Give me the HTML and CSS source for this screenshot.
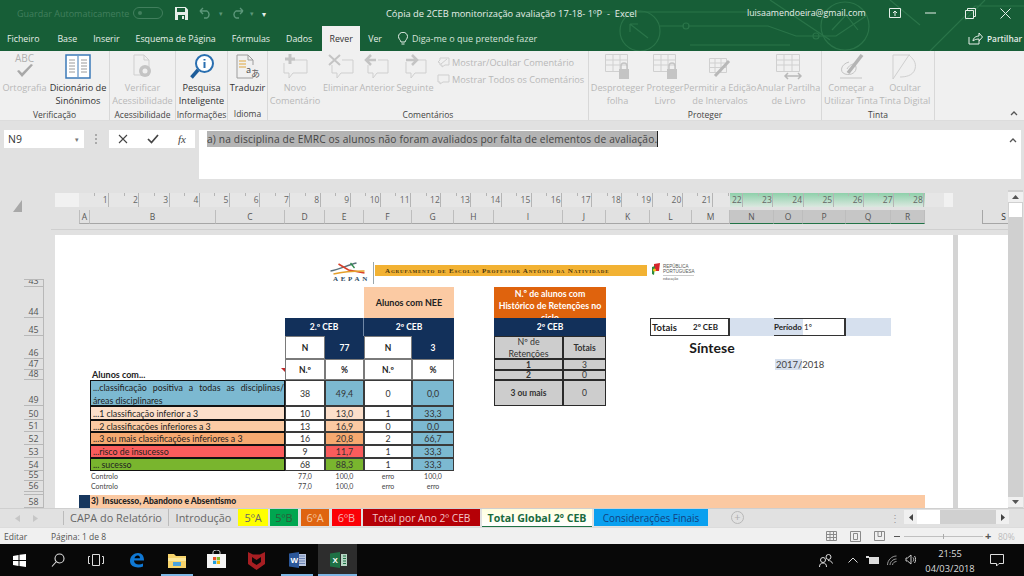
FILE: index.html
```html
<!DOCTYPE html>
<html lang="pt">
<head>
<meta charset="utf-8">
<title>Excel</title>
<link rel="stylesheet" href="styles.css">
</head>
<body>
<div class="app">
  <header class="head">
    <svg class="circuit" viewBox="0 0 424 51" width="424" height="51" fill="none" stroke="#2a7449" stroke-width="1.2">
      <circle cx="40" cy="31" r="20"/><path d="M30 24l18 14M30 24h8M30 24v8"/>
      <path d="M0 12h110l60-0M88 26h80l28 10h40l30-20M60 26h24"/><circle cx="86" cy="26" r="3"/><circle cx="216" cy="36" r="3"/>
      <path d="M90 45h100M170 0l60 40"/>
      <circle cx="245" cy="26" r="24"/><path d="M232 30l14-15 12 15"/>
      <path d="M330 51l45-45h49M385 0l-20 20M290 0l30 25"/>
    </svg>
    <div class="titlebar">
      <span class="autosave">Guardar Automaticamente</span>
      <span class="toggle"><i></i></span>
      <svg class="qat-save" width="13" height="13" viewBox="0 0 13 13"><path d="M0 0h10.5L13 2.5V13H0z" fill="#e6efe9"/><path d="M2 1h8v4H2zM3 8h7v5H3z" fill="#175e37"/><path d="M7 9h2v3H7z" fill="#e6efe9"/></svg>
      <svg class="qat-undo" width="16" height="12" viewBox="0 0 16 12" fill="none" stroke="#5c977a" stroke-width="1.4"><path d="M2 4h7a4 4 0 0 1 0 7H6M2 4l3-3M2 4l3 3"/></svg>
      <span class="qat-drop">▾</span>
      <svg class="qat-redo" width="16" height="12" viewBox="0 0 16 12" fill="none" stroke="#5c977a" stroke-width="1.4"><path d="M14 4H7a4 4 0 0 0 0 7h3M14 4l-3-3M14 4l-3 3"/></svg>
      <span class="qat-drop">▾</span>
      <span class="qat-more">▾</span>
      <span class="doc">Cópia de 2CEB monitorização avaliação 17-18- 1ºP&nbsp; -&nbsp; Excel</span>
      <span class="user">luisaamendoeira@gmail.com</span>
      <svg class="win-a" width="12" height="10" viewBox="0 0 12 10" fill="none" stroke="#e6efe9"><path d="M.5.5h11v9H.5zM6 8V3M4 5l2-2 2 2"/></svg>
      <svg class="win-b" width="11" height="2" viewBox="0 0 11 2"><path d="M0 1h11" stroke="#e6efe9"/></svg>
      <svg class="win-c" width="11" height="11" viewBox="0 0 11 11" fill="none" stroke="#e6efe9"><path d="M.5 2.5h8v8h-8zM2.5 2.5v-2h8v8h-2"/></svg>
      <svg class="win-d" width="11" height="11" viewBox="0 0 11 11" stroke="#e6efe9"><path d="M.5.5l10 10M10.5.5l-10 10"/></svg>
    </div>
    <nav class="tabs">
      <span class="tab">Ficheiro</span>
      <span class="tab tab-base">Base</span>
      <span class="tab">Inserir</span>
      <span class="tab">Esquema de Página</span>
      <span class="tab">Fórmulas</span>
      <span class="tab">Dados</span>
      <span class="tab tab-on">Rever</span>
      <span class="tab">Ver</span>
      <svg class="bulb" width="10" height="14" viewBox="0 0 10 14" fill="none" stroke="#e6efe9"><path d="M3 10C2.600 8 .5 7 .5 4.500a4.500 4.200 0 0 1 9 0C9.500 7 7.400 8 7 10zM3.500 12h3"/></svg>
      <span class="tell">Diga-me o que pretende fazer</span>
      <svg class="share-ic" width="15" height="13" viewBox="0 0 15 13" fill="none" stroke="#e6efe9"><path d="M1 5v7h10V9M5 9c0-3 3-5 6-5V1l3.500 4L11 9V7C8 7 6 8 5 9z"/></svg>
      <span class="share">Partilhar</span>
    </nav>
  </header>

  <section class="ribbon">
    <div class="grp g-ver">
      <div class="grp-body">
        <div class="btn off b-ort">
          <div class="ic ic-abc"><span class="abc">ABC</span><svg width="18" height="16" viewBox="0 0 18 16"><path d="M1 8l5 6L17 2l-2-1-9 9-3-3z" fill="#a8a8a8"/></svg></div>
          <span>Ortografia</span>
        </div>
        <div class="btn b-dic">
          <div class="ic"><svg width="26" height="25" viewBox="0 0 26 25" fill="none"><path d="M1 1h24v23H1z" fill="#fff" stroke="#3b79b8" stroke-width="1.500"/><path d="M13 2v21" stroke="#3b79b8"/><path d="M4 6h6M4 9h6M4 12h6M4 15h6M4 18h6M16 6h6M16 9h6M16 12h6M16 15h6M16 18h6" stroke="#9a9a9a"/></svg></div>
          <span>Dicionário de<br>Sinónimos</span>
        </div>
      </div>
      <div class="grp-label">Verificação</div>
    </div>
    <div class="grp g-ace">
      <div class="grp-body">
        <div class="btn off b-ace">
          <div class="ic"><svg width="20" height="24" viewBox="0 0 20 24" fill="none" stroke="#cfcfcf"><path d="M1 1h10l5 5v15H1zM11 1v5h5"/><circle cx="12" cy="17" r="6" fill="#c4c4c4" stroke="none"/><circle cx="12" cy="17" r="2.500" fill="#efefef" stroke="none"/></svg></div>
          <span>Verificar<br>Acessibilidade</span>
        </div>
      </div>
      <div class="grp-label">Acessibilidade</div>
    </div>
    <div class="grp g-inf">
      <div class="grp-body">
        <div class="btn b-pes">
          <div class="ic"><svg width="24" height="26" viewBox="0 0 24 26" fill="none"><circle cx="14.500" cy="9.500" r="8.500" fill="#fff" stroke="#2a6fb0" stroke-width="2"/><path d="M8 16L1.500 23.500" stroke="#1d5c99" stroke-width="3.500"/><path d="M14.500 5v1.500M14.500 8v6" stroke="#2a6fb0" stroke-width="2"/></svg></div>
          <span>Pesquisa<br>Inteligente</span>
        </div>
      </div>
      <div class="grp-label">Informações</div>
    </div>
    <div class="grp g-idi">
      <div class="grp-body">
        <div class="btn b-tra">
          <div class="ic"><svg width="24" height="25" viewBox="0 0 24 25" fill="none" stroke="#9c9c9c"><path d="M1 1h11l5 5v18H1zM12 1v5h5"/><path d="M3 7h7M3 10h7M3 13h7" stroke="#e0a63c"/><path d="M13 11h9v12h-9z" fill="#efefef" stroke="none"/><text x="10" y="19" class="ic-txt">a</text><text x="15" y="23" class="ic-txt">あ</text></svg></div>
          <span>Traduzir</span>
        </div>
      </div>
      <div class="grp-label">Idioma</div>
    </div>
    <div class="grp g-com">
      <div class="grp-body">
        <div class="btn off b-nov">
          <div class="ic"><svg width="26" height="26" viewBox="0 0 26 26" fill="none" stroke="#cfcfcf"><path d="M6 6h19v13H11l-4 5v-5H2V9"/><path d="M8 0v10M3 5h10" stroke="#c4c4c4" stroke-width="3"/></svg></div>
          <span>Novo<br>Comentário</span>
        </div>
        <div class="btn off b-eli">
          <div class="ic"><svg width="26" height="26" viewBox="0 0 26 26" fill="none" stroke="#cfcfcf"><path d="M14 6h11v13H13l-4 5v-5H4V11"/><path d="M1 1l11 10M12 1L1 11" stroke="#c4c4c4" stroke-width="2"/></svg></div>
          <span>Eliminar</span>
        </div>
        <div class="btn off b-ant">
          <div class="ic"><svg width="26" height="26" viewBox="0 0 26 26" fill="none" stroke="#cfcfcf"><path d="M14 6h10v13H13l-4 5v-5H4V11"/><path d="M12 6H3M7 1L2 6l5 5" stroke="#c4c4c4" stroke-width="2.500"/></svg></div>
          <span>Anterior</span>
        </div>
        <div class="btn off b-seg">
          <div class="ic"><svg width="26" height="26" viewBox="0 0 26 26" fill="none" stroke="#cfcfcf"><path d="M16 6h8v13H13l-4 5v-5H4V8"/><path d="M4 6h10M10 1l5 5-5 5" stroke="#c4c4c4" stroke-width="2.500"/></svg></div>
          <span>Seguinte</span>
        </div>
        <div class="small-col off">
          <div class="small"><svg width="13" height="11" viewBox="0 0 13 11" fill="none" stroke="#cfcfcf"><path d="M12 1H3v2L1 5l2 1v2h2v2l3-2h4z"/><path d="M4 7l6-5" /></svg><span>Mostrar/Ocultar Comentário</span></div>
          <div class="small"><svg width="13" height="11" viewBox="0 0 13 11" fill="none" stroke="#cfcfcf"><path d="M1 1h11v7H6l-3 2V8H1z"/></svg><span>Mostrar Todos os Comentários</span></div>
        </div>
      </div>
      <div class="grp-label">Comentários</div>
    </div>
    <div class="grp g-pro">
      <div class="grp-body">
        <div class="btn off b-des">
          <div class="ic"><svg width="25" height="26" viewBox="0 0 25 26" fill="none" stroke="#d0d0d0"><path d="M.5.500h22v17H.5zM.5 6h22M.5 11h22M8 .5v17M15 .5v17"/><path d="M14 15h10v10H14z" fill="#c4c4c4" stroke="none"/><path d="M16 15v-3a3 3 0 0 1 6 0v3" stroke="#c4c4c4" stroke-width="1.500"/></svg></div>
          <span>Desproteger<br>folha</span>
        </div>
        <div class="btn off b-pli">
          <div class="ic"><svg width="25" height="26" viewBox="0 0 25 26" fill="none" stroke="#d0d0d0"><path d="M.5.500h22v17H.5zM.5 6h22M.5 11h22M8 .5v17M15 .5v17"/><path d="M14 15h10v10H14z" fill="#c4c4c4" stroke="none"/><path d="M16 15v-3a3 3 0 0 1 6 0v3" stroke="#c4c4c4" stroke-width="1.500"/></svg></div>
          <span>Proteger<br>Livro</span>
        </div>
        <div class="btn off b-per">
          <div class="ic"><svg width="25" height="26" viewBox="0 0 25 26" fill="none" stroke="#d0d0d0"><path d="M1.500 4.500h17v14h-17zM1.500 9h17M1.500 13.500h17M7 4.500v14M13 4.500v14"/><path d="M21 7L7 22" stroke="#b8b8b8" stroke-width="3"/></svg></div>
          <span>Permitir a Edição<br>de Intervalos</span>
        </div>
        <div class="btn off b-anu">
          <div class="ic"><svg width="26" height="26" viewBox="0 0 26 26" fill="none" stroke="#d0d0d0"><path d="M.5.500h23v17H.5zM.5 6h23M.5 11h23M8 .5v17M16 .5v17"/><path d="M9 22h16M12 19l-3 3 3 3M22 19l3 3-3 3" stroke="#b8b8b8" stroke-width="1.500"/></svg></div>
          <span>Anular Partilha<br>de Livro</span>
        </div>
      </div>
      <div class="grp-label">Proteger</div>
    </div>
    <div class="grp g-tin">
      <div class="grp-body">
        <div class="btn off b-com">
          <div class="ic"><svg width="25" height="26" viewBox="0 0 25 26" fill="none" stroke="#c4c4c4"><path d="M10 8C2 10 0 18 6 20s12-2 11-7-6-3-9 2" /><path d="M23 1L9 19" stroke="#b4b4b4" stroke-width="3.500"/><path d="M1 24h22" /></svg></div>
          <span>Começar a<br>Utilizar Tinta</span>
        </div>
        <div class="btn off b-ocu">
          <div class="ic"><svg width="26" height="26" viewBox="0 0 26 26" fill="none" stroke="#cfcfcf"><path d="M1 1h17M1 1v24"/><path d="M1 25L17 1c3 3 8 7 6 14s-10 8-15 8"/></svg></div>
          <span>Ocultar<br>Tinta Digital</span>
        </div>
      </div>
      <div class="grp-label">Tinta</div>
    </div>
    <div class="ribbon-end"><svg width="8" height="5" viewBox="0 0 8 5" fill="none" stroke="#555" stroke-width="1.300"><path d="M1 4l3-3 3 3"/></svg></div>
  </section>

  <section class="formula">
    <div class="namebox"><span>N9</span><i>▾</i></div>
    <div class="grip"></div>
    <div class="fxbox">
      <svg width="10" height="10" viewBox="0 0 10 10" stroke="#444" stroke-width="1.100"><path d="M1 1l8 8M9 1L1 9"/></svg>
      <svg width="12" height="10" viewBox="0 0 12 10" fill="none" stroke="#444" stroke-width="1.700"><path d="M1 5l3.500 3.500L11 1"/></svg>
      <span class="fx">fx</span>
    </div>
    <div class="finput">
      <span class="fsel">a) na disciplina de EMRC os alunos não foram avaliados por falta de elementos de avaliação.</span>
      <svg class="fup" width="8" height="5" viewBox="0 0 8 5" fill="none" stroke="#555" stroke-width="1.300"><path d="M1 4l3-3 3 3"/></svg>
    </div>
  </section>

  <section class="sheet">
    <div class="sheet-main">
      <div class="top">
        <div class="corner"><svg width="10" height="12" viewBox="0 0 10 12"><path d="M9 0v12H0z" fill="#a8a8a8"/></svg></div>
        <div class="top-stack">
          <div class="ruler">
            <div class="ruler-margin"></div>
            <span>1</span><span>2</span><span>3</span><span>4</span><span>5</span><span>6</span><span>7</span><span>8</span><span>9</span><span>10</span><span>11</span><span>12</span><span>13</span><span>14</span><span>15</span><span>16</span><span>17</span><span>18</span><span>19</span><span>20</span><span>21</span><span>22</span><span>23</span><span>24</span><span>25</span><span>26</span><span>27</span><span>28</span>
            <div class="ruler-sel"></div>
            <div class="ruler-patch"></div>
          </div>
          <div class="colhead">
            <span class="col-gap"></span>
            <span>A</span><span>B</span><span>C</span><span>D</span><span>E</span><span>F</span><span>G</span><span>H</span><span>I</span><span>J</span><span>K</span><span>L</span><span>M</span>
            <span class="sel">N</span><span class="sel">O</span><span class="sel">P</span><span class="sel">Q</span><span class="sel">R</span>
            <span class="col-gap2"></span><span class="col-s">S</span>
          </div>
        </div>
      </div>
      <div class="pages">
        <div class="rowhead">
          <i></i><i></i>
          <span class="r-clip">43</span><span>44</span><span>45</span><span>46</span><span>47</span><span>48</span><span>49</span><span>50</span><span>51</span><span>52</span><span>53</span><span>54</span><span>55</span><span>56</span><span class="r-tiny"></span><span>58</span>
        </div>
        <div class="page">
          <div class="logo">
            <div class="logo-mark">
              <svg width="37" height="14" viewBox="0 0 36 14" fill="none"><path d="M0 9c8-1 17-6 26-8" stroke="#59707a" stroke-width="1.300"/><path d="M8 2l10 6 16 3" stroke="#d9402a" stroke-width="1.600"/><path d="M3 12c8-2 22-3 31-3" stroke="#e5a02b" stroke-width="1.500"/><path d="M20 1l4 5" stroke="#2c8a4b" stroke-width="1.300"/></svg>
              <b>AEPAN</b>
            </div>
            <div class="logo-bar"><span>Agrupamento de Escolas Professor António da Natividade</span></div>
            <svg class="flag" width="9" height="13" viewBox="0 0 9 13"><path d="M3 1l6-1-1 8H3z" fill="#d6262c"/><path d="M1 4l3-1-1 9-2-1z" fill="#2b8b3e"/><circle cx="3.500" cy="7" r="1.600" fill="#f0c419"/></svg>
            <div class="rep"><b>REPÚBLICA<br>PORTUGUESA</b><em>educação</em></div>
          </div>

          <div class="c nee">Alunos com NEE</div>
          <div class="c ret-title">N.º de alunos com<br>Histórico de Retenções no<br>ciclo</div>

          <div class="c navy h1a">2.º CEB</div>
          <div class="c navy h1b">2º CEB</div>
          <div class="c navy h1c">2º CEB</div>
          <div class="c tot tot-a"><b>Totais</b></div>
          <div class="c tot tot-b"><b>2º CEB</b></div>
          <div class="c tot-fill tf-a"></div>
          <div class="c tot tot-c"><b>Período</b></div>
          <div class="c tot tot-d">1º</div>
          <div class="c tot-fill tf-b"></div>

          <div class="c w b r46 cD">N</div>
          <div class="c navy r46 cE">77</div>
          <div class="c w b r46 cF">N</div>
          <div class="c navy r46 cG">3</div>
          <div class="c g ret-h1">Nº de Retenções</div>
          <div class="c g b ret-h2">Totais</div>
          <div class="c sintese">Síntese</div>

          <div class="c w b nm cD">N.º</div>
          <div class="c w b nm cE">%</div>
          <div class="c w b nm cF">N.º</div>
          <div class="c w b nm cG">%</div>
          <div class="c g b r47 cI">1</div><div class="c g r47 cJ">3</div>
          <div class="c g b r48 cI">2</div><div class="c g r48 cJ">0</div>
          <div class="year"><span>2017/</span>2018</div>

          <div class="alunos">Alunos com...</div>
          <span class="marker"></span>

          <div class="lab blue r49 just">...classificação positiva a todas as disciplinas/ áreas disciplinares</div>
          <div class="c w v r49 cD">38</div><div class="c blue v r49 cE">49,4</div><div class="c w v r49 cF">0</div><div class="c blue v r49 cG">0,0</div>
          <div class="c g b r49 cI">3 ou mais</div><div class="c g r49 cJ">0</div>

          <div class="lab p1 r50">...1 classificação inferior a 3</div>
          <div class="c w v r50 cD">10</div><div class="c p1 v r50 cE">13,0</div><div class="c w v r50 cF">1</div><div class="c blue v r50 cG">33,3</div>

          <div class="lab p2 r51">...2 classificações inferiores a 3</div>
          <div class="c w v r51 cD">13</div><div class="c p2 v r51 cE">16,9</div><div class="c w v r51 cF">0</div><div class="c blue v r51 cG">0,0</div>

          <div class="lab p3 r52">...3 ou mais classificações inferiores a 3</div>
          <div class="c w v r52 cD">16</div><div class="c p3 v r52 cE">20,8</div><div class="c w v r52 cF">2</div><div class="c blue v r52 cG">66,7</div>

          <div class="lab red r53">...risco de insucesso</div>
          <div class="c w v r53 cD">9</div><div class="c red v r53 cE">11,7</div><div class="c w v r53 cF">1</div><div class="c blue v r53 cG">33,3</div>

          <div class="lab green r54">... sucesso</div>
          <div class="c w v r54 cD">68</div><div class="c green v r54 cE">88,3</div><div class="c w v r54 cF">1</div><div class="c blue v r54 cG">33,3</div>

          <div class="ctl-l r55">Controlo</div><div class="ctl r55 cD">77,0</div><div class="ctl r55 cE">100,0</div><div class="ctl r55 cF">erro</div><div class="ctl r55 cG">100,0</div>
          <div class="ctl-l r56">Controlo</div><div class="ctl r56 cD">77,0</div><div class="ctl r56 cE">100,0</div><div class="ctl r56 cF">erro</div><div class="ctl r56 cG">erro</div>

          <div class="sec-mark"></div>
          <div class="sec">3)&nbsp; Insucesso, Abandono e Absentismo</div>
        </div>
        <div class="page-gap"></div>
        <div class="page2"></div>
      </div>
    </div>
    <div class="vscroll">
      <span class="sb-btn"><svg width="7" height="4" viewBox="0 0 7 4"><path d="M0 4l3.500-4L7 4z" fill="#555"/></svg></span>
      <span class="sb-thumb"></span>
      <span class="sb-btn sb-down"><svg width="7" height="4" viewBox="0 0 7 4"><path d="M0 0l3.500 4L7 0z" fill="#555"/></svg></span>
    </div>
  </section>

  <section class="sheettabs">
    <span class="nav"><svg width="5" height="7" viewBox="0 0 5 7"><path d="M5 0v7L0 3.500z" fill="#c6c6c6"/></svg><svg width="5" height="7" viewBox="0 0 5 7"><path d="M0 0v7l5-3.500z" fill="#c6c6c6"/></svg></span>
    <span class="st st-first">CAPA do Relatório</span>
    <span class="st st-intro">Introdução</span>
    <span class="st st-col s5a">5ºA</span>
    <span class="st st-col s5b">5ºB</span>
    <span class="st st-col s6a">6ºA</span>
    <span class="st st-col s6b">6ºB</span>
    <span class="st st-col stot">Total por Ano 2º CEB</span>
    <span class="st st-on">Total Global 2º CEB</span>
    <span class="st st-col scon">Considerações Finais</span>
    <span class="add">+</span>
    <span class="dots">⋮</span>
    <div class="hscroll">
      <span class="hs-btn"><svg width="4" height="7" viewBox="0 0 4 7"><path d="M4 0v7L0 3.500z" fill="#444"/></svg></span>
      <span class="hs-thumb"></span>
      <span class="hs-track"></span>
      <span class="hs-btn"><svg width="4" height="7" viewBox="0 0 4 7"><path d="M0 0v7l4-3.500z" fill="#444"/></svg></span>
    </div>
  </section>

  <footer class="status">
    <span class="st-edit">Editar</span>
    <span class="st-page">Página: 1 de 8</span>
    <svg class="vw-a" width="11" height="10" viewBox="0 0 11 10" fill="none" stroke="#8a8a8a"><path d="M.5.500h10v9H.5zM.5 3.500h10M.5 6.500h10M4 .5v9M7.500.5v9"/></svg>
    <svg class="vw-b" width="11" height="11" viewBox="0 0 11 11" fill="none" stroke="#8a8a8a"><path d="M.5.500h10v10H.5zM3.500 2.500h4v6h-4z"/></svg>
    <svg class="vw-c" width="11" height="10" viewBox="0 0 11 10" fill="none" stroke="#8a8a8a"><path d="M.5.500h10v9H.5zM4 .5v5h3.500v-5"/></svg>
    <span class="zm-minus"></span>
    <span class="zm-track"><i></i></span>
    <span class="zm-plus">+</span>
    <span class="zm-val">80%</span>
  </footer>

  <footer class="taskbar">
    <svg class="tb-win" width="13" height="13" viewBox="0 0 13 13"><path d="M0 2l5.500-1v5H0zM6.500 .8L13 0v6H6.500zM0 7h5.500v5L0 11zM6.500 7H13v6l-6.500-1z" fill="#fff"/></svg>
    <svg class="tb-search" width="14" height="14" viewBox="0 0 14 14" fill="none" stroke="#ddd" stroke-width="1.100"><circle cx="8.500" cy="5.500" r="4.500"/><path d="M5 9l-4 4.500"/></svg>
    <svg class="tb-view" width="16" height="12" viewBox="0 0 16 12" fill="none" stroke="#ddd"><path d="M4.500.5h7v11h-7zM2 2.500H.5v7H2M14 2.500h1.500v7H14"/></svg>
    <svg class="tb-edge" width="16" height="16" viewBox="0 0 16 16" fill="none"><path d="M1 9C1 4 5 1 9 1s6 3 6 7.500H5c0 4 5 5 9 3v3c-5 2-13 1-13-5.500z" fill="#0f78d4"/><path d="M5.500 6.200h5.500C11 4 9.500 3.500 8.300 3.500 7 3.500 6 4.500 5.500 6.200z" fill="#000"/></svg>
    <svg class="tb-folder" width="18" height="15" viewBox="0 0 18 15"><path d="M0 1h6l2 2h10v12H0z" fill="#f6d36b"/><path d="M0 5h18v3H0z" fill="#fbe79b"/><path d="M5 9h8v4H5z" fill="#4aa3df"/></svg>
    <svg class="tb-store" width="19" height="18" viewBox="0 0 19 18"><path d="M0 4h19v14H0z" fill="#f4f4f4"/><path d="M6 4V2a3.500 2 0 0 1 7 0v2" fill="none" stroke="#ccc"/><path d="M6 7h3.200v3.200H6z" fill="#e94e25"/><path d="M9.800 7H13v3.200H9.800z" fill="#7fba2c"/><path d="M6 10.800h3.200V14H6z" fill="#1e9fe0"/><path d="M9.800 10.800H13V14H9.800z" fill="#f5b70a"/></svg>
    <svg class="tb-mc" width="17" height="19" viewBox="0 0 17 19"><path d="M0 1l5 2.500h7L17 1v12l-8.500 6L0 13z" fill="#a61e22"/><path d="M4 6l4.500 3L13 6v5l-4.500 3L4 11z" fill="#0a0a0a"/></svg>
    <svg class="tb-word" width="17" height="16" viewBox="0 0 17 16"><path d="M7 2h10v12H7z" fill="#b9c6de"/><path d="M10 4h6M10 6.500h6M10 9h6M10 11.500h6" stroke="#6b83b3"/><path d="M0 1.500L10 0v16L0 14.500z" fill="#2b579a"/><text x="1.500" y="11" class="tb-letter">W</text></svg>
    <i class="tb-line l1"></i><i class="tb-line l2"></i><i class="tb-active"></i>
    <svg class="tb-xl" width="17" height="16" viewBox="0 0 17 16"><path d="M0 1.500L10 0v16L0 14.500z" fill="#1e7145"/><path d="M11 2h6v12h-6z" fill="#b7d6c4"/><path d="M13 4h3M13 6.500h3M13 9h3M13 11.500h3" stroke="#1e7145" stroke-width="1.200"/><text x="2.500" y="11" class="tb-letter">X</text></svg>
    <svg class="tr-people" width="14" height="13" viewBox="0 0 14 13" fill="none" stroke="#ddd"><circle cx="9.500" cy="3" r="2.500"/><circle cx="4" cy="6" r="2.500"/><path d="M.5 13c0-3 1.500-4 3.500-4s3.500 1 3.500 4M9 6.500c2 0 4 1 4.500 3"/></svg>
    <svg class="tr-up" width="10" height="6" viewBox="0 0 10 6" fill="none" stroke="#ddd"><path d="M.5 5.500L5 1l4.500 4.500"/></svg>
    <svg class="tr-bat" width="13" height="8" viewBox="0 0 13 8"><path d="M0 0h3v2H0zM3 1h10v7H3z" fill="#ddd"/></svg>
    <svg class="tr-wifi" width="10" height="11" viewBox="0 0 10 11" fill="none" stroke="#999"><path d="M.5 10C.5 5 5 1 9.500 1M3 10c0-3 3-6 6.500-6M5.500 10c0-2 2-3.500 4-3.500"/></svg>
    <svg class="tr-vol" width="11" height="11" viewBox="0 0 11 11" fill="none" stroke="#ccc"><path d="M1 4v3h1.500L6 10V1L2.500 4zM8 3.500c1 1 1 3 0 4M9.500 2c1.500 2 1.500 5 0 7"/></svg>
    <div class="clock"><span>21:55</span><span>04/03/2018</span></div>
    <svg class="tr-msg" width="14" height="13" viewBox="0 0 14 13" fill="none" stroke="#ddd"><path d="M.5.500h13v9H9L6.500 12V9.500h-6z"/></svg>
  </footer>
</div>
</body>
</html>
```

FILE: styles.css
```css
* { box-sizing: border-box; }
html, body { margin: 0; padding: 0; }
body { width: 1024px; height: 576px; overflow: hidden; font-family: "Open Sans", "Liberation Sans", sans-serif; color: #333; background: #e1e1e1; }
.app { display: flex; flex-direction: column; width: 1024px; height: 576px; overflow: hidden; }

/* title + tabs */
.head { position: relative; height: 51px; background: #175e37; color: #e6efe9; flex: none; }
.circuit { position: absolute; right: 0; top: 0; }
.titlebar { position: relative; display: flex; align-items: center; height: 26px; font-size: 9.300px; }
.autosave { margin-left: 17px; width: 112px; color: #417f5d; font-size: 9px; white-space: nowrap; }
.toggle { margin-left: 4px; width: 30px; height: 12px; border: 1px solid #417f5d; border-radius: 6px; display: flex; align-items: center; padding-left: 4px; }
.toggle i { width: 4px; height: 4px; border-radius: 50%; background: #417f5d; }
.qat-save { margin-left: 12px; }
.qat-undo { margin-left: 10px; }
.qat-drop { width: 14px; text-align: center; font-size: 7px; color: #5c977a; }
.qat-redo { margin-left: 1px; }
.qat-more { margin-left: 3px; font-size: 8px; color: #e6efe9; }
.doc { position: absolute; left: 386px; white-space: nowrap; }
.user { position: absolute; left: 747px; white-space: nowrap; font-size: 8.800px; }
.win-a { position: absolute; left: 889px; }
.win-b { position: absolute; left: 925px; }
.win-c { position: absolute; left: 965px; }
.win-d { position: absolute; left: 1000px; }

.tabs { position: relative; display: flex; align-items: center; gap: 16px; height: 25px; padding-left: 7px; font-size: 8.800px; }
.tab { white-space: nowrap; }
.tab-base { margin-left: 2px; }
.tab-on { background: #f0f0f0; color: #333; height: 25px; width: 38px; margin: 0 -8px 0 -6px; text-align: center; line-height: 26px; align-self: flex-end; }
.bulb { margin-left: 0; }
.tell { margin-left: -12px; white-space: nowrap; color: #d5e2da; font-size: 9px; }
.share-ic { position: absolute; left: 968px; top: 6px; }
.share { position: absolute; left: 987px; font-weight: 600; font-size: 8.300px; }

/* ribbon */
.ribbon { display: flex; height: 70px; flex: none; background: #f0f0f0; border-bottom: 1px solid #dcdcdc; font-size: 9.200px; color: #333; }
.grp { display: flex; flex-direction: column; height: 69px; border-right: 1px solid #d8d8d8; flex: none; }
.g-ver { width: 110px; }
.g-ace { width: 66px; }
.g-inf { width: 52px; }
.g-idi { width: 40px; }
.g-com { width: 321px; }
.g-pro { width: 233px; }
.g-tin { width: 113px; }
.grp-body { flex: 1; display: flex; }
.grp-label { height: 14px; text-align: center; font-size: 8.500px; line-height: 15px; color: #444; }
.btn { display: flex; flex-direction: column; align-items: center; text-align: center; line-height: 13px; white-space: nowrap; flex: none; }
.btn .ic { height: 29px; padding-top: 3px; display: flex; flex-direction: column; align-items: center; position: relative; }
.btn > span { margin-top: 1px; }
.off { color: #b8b8b8; }
.b-ort { width: 49px; }
.b-dic { width: 58px; }
.b-ace { width: 65px; }
.b-pes, .b-pes span { width: 51px; }
.b-tra { width: 39px; }
.b-nov { width: 54px; }
.b-eli { width: 37px; }
.b-ant { width: 36px; }
.b-seg { width: 40px; }
.b-des { width: 57px; }
.b-pli { width: 38px; }
.b-per { width: 72px; }
.b-anu { width: 65px; }
.b-com { width: 58px; }
.b-ocu { width: 50px; }
.ic-abc { padding-top: 0 !important; }
.abc { font-size: 10px; line-height: 12px; color: #b0b0b0; margin-top: 1px; }
.ic-abc svg { margin-top: -1px; }
.ic-txt { font-size: 9px; fill: #555; stroke: none; font-family: "Noto Sans CJK JP", sans-serif; }
.small-col { display: flex; flex-direction: column; gap: 3px; padding: 4px 0 0 2px; white-space: nowrap; }
.small { display: flex; align-items: center; gap: 2px; height: 14px; }
.ribbon-end { flex: 1; display: flex; align-items: flex-end; justify-content: flex-end; padding: 0 6px 4px 0; }

/* formula bar */
.formula { display: flex; flex: none; height: 69px; padding-top: 9px; background: #e1e1e1; }
.namebox { display: flex; align-items: center; justify-content: space-between; margin-left: 4px; width: 80px; height: 18px; background: #fff; padding: 0 5px 0 4px; font-size: 10.500px; }
.namebox i { font-size: 7px; font-style: normal; color: #777; }
.grip { width: 2px; height: 10px; margin: 4px 12px 0 11px; border-left: 2px dotted #aaa; }
.fxbox { display: flex; align-items: center; justify-content: space-between; width: 86px; height: 18px; padding: 0 9px 0 9px; background: #fff; }
.fx { font-family: "Liberation Serif", serif; font-style: italic; font-size: 11px; color: #444; }
.finput { position: relative; margin-left: 4px; width: 822px; height: 49px; background: #fff; padding: 1px 0 0 8px; font-size: 10.200px; letter-spacing: .156px; color: #555; }
.fsel { display: inline-block; background: #b4b4b4; height: 16px; line-height: 16px; white-space: nowrap; color: #444; border-right: 1px solid #222; }
.fup { position: absolute; right: 4px; top: 8px; }

/* sheet */
.sheet { display: flex; height: 318px; flex: none; overflow: hidden; background: #e1e1e1; }
.sheet-main { width: 1008px; flex: none; display: flex; flex-direction: column; overflow: hidden; }
.top { display: flex; height: 45px; flex: none; }
.corner { width: 55px; flex: none; padding: 5px 0 0 13px; }
.top-stack { width: 953px; padding-top: 3px; }
.ruler { position: relative; display: flex; width: 898px; height: 14px; background: #e6e6e6; font-size: 8.500px; color: #666; }
.ruler-margin { width: 24px; flex: none; background: #f1f1f1; }
.ruler span { width: 30.200px; flex: none; text-align: right; padding-right: 1.500px; line-height: 13px; background: linear-gradient(#b5b5b5, #b5b5b5) no-repeat 50% 0 / 1px 3px, linear-gradient(#b5b5b5, #b5b5b5) no-repeat 100% 0 / 1px 14px; position: relative; z-index: 1; }
.ruler-sel { position: absolute; left: 675px; top: 0; width: 195px; height: 14px; background: linear-gradient(#8ed0aa, #dbe8e0); }
.ruler-patch { position: absolute; left: 889px; top: 0; width: 9px; height: 14px; background: #f1f1f1; }
.colhead { display: grid; grid-template-columns: 24px 11px 126px 69px 40px 39px 48px 42px 40px 69px 43px 44px 42px 38px 44px 29px 43px 45px 34px 57px 26px; margin-top: 3px; height: 14px; font-size: 8.500px; color: #555; }
.colhead span { text-align: center; line-height: 13px; border-right: 1px solid #bdbdbd; border-bottom: 1px solid #a6a6a6; }
.colhead .col-gap, .colhead .col-gap2 { border: 0; }
.colhead .sel { background: #c6c6c6; border-bottom: 1px solid #217346; }
.colhead .col-s { border-right: 0; border-left: 1px solid #a6a6a6; text-align: right; padding-right: 2px; color: #333; }
.colhead span:nth-child(2) { border-left: 1px solid #bdbdbd; }

.pages { display: flex; height: 273px; flex: none; position: relative; }
.pages::before { content: ""; position: absolute; left: 51px; right: 0; top: -6px; height: 1px; background: #cfcfcf; }
.rowhead { width: 55px; flex: none; display: grid; grid-template-rows: 27px 17px 8px 31px 18px 23px 11px 10px 26px 14px 12px 13px 13px 13px 10px 11px 3px 13px; font-size: 8.800px; color: #555; padding-left: 24px; padding-right: 11px; }
.rowhead span { display: flex; align-items: flex-end; justify-content: center; border-bottom: 1px solid #b8b8b8; border-right: 1px solid #b8b8b8; line-height: 9px; }
.rowhead .r-clip { overflow: hidden; border-top: 1px solid #b8b8b8; }
.r-tiny { border-bottom: 1px solid #b8b8b8; }

.page { width: 898px; flex: none; background: #fff; overflow: hidden; display: grid; font-family: Lato, "Liberation Sans", sans-serif; font-size: 8.500px; color: #222;
  grid-template-columns: [GUT] 24px [A] 11px [B] 126px [C] 69px [D] 40px [E] 39px [F] 48px [G] 42px [H] 40px [I] 69px [J] 43px [K] 44px [L] 42px [M] 38px [N] 44px [O] 29px [P] 43px [Q] 45px [R] 34px [END] 28px;
  grid-template-rows: 27px 17px 8px 31px 18px 23px 11px 10px 26px 14px 12px 13px 13px 13px 10px 11px 3px 13px;
}
.page-gap { width: 5px; flex: none; background: #d4d4d4; }
.page2 { width: 50px; flex: none; background: #fff; }

.logo { grid-column: 1 / -1; grid-row: 2 / 4; display: flex; align-items: flex-start; padding-left: 275px; overflow: visible; height: 25px; }
.logo-mark { width: 44px; display: flex; flex-direction: column; align-items: flex-start; border-right: 1px solid #9aa7ad; height: 22px; }
.logo-mark b { font-family: "Liberation Serif", serif; font-size: 7px; letter-spacing: 2.700px; color: #2c4a63; line-height: 7px; padding-left: 3px; white-space: nowrap; }
.logo-bar { margin: 3px 0 0 1px; width: 272px; height: 11px; background: #f2b233; display: flex; align-items: center; padding-left: 10px; font-family: "Liberation Serif", serif; font-size: 7px; font-weight: bold; font-variant: small-caps; letter-spacing: .82px; color: #4a3810; white-space: nowrap; overflow: hidden; }
.flag { margin: 1px 0 0 4px; }
.rep { margin: 2px 0 0 3px; font-family: "Liberation Sans", sans-serif; font-size: 4.500px; line-height: 5px; color: #555; display: flex; flex-direction: column; }
.rep b { font-weight: normal; border-bottom: 1px solid #ccc; padding-bottom: 1px; }
.rep em { font-style: normal; font-size: 3.500px; line-height: 6px; }

.c { display: flex; align-items: center; justify-content: center; text-align: center; min-width: 0; }
.b { font-weight: 700; }
.w { background: #fff; border: 1px solid #7a7a7a; }
.g { background: #cdcdcd; border: 1px solid #2a2a2a; color: #333; }
.navy { background: #12305a; color: #fff; font-weight: 700; border: 1px solid #6f87a6; border-width: 0 1px 0 0; }
.blue { background: #7cb9d1; }
.p1 { background: #fcdfca; }
.p2 { background: #fbcaa3; }
.p3 { background: #f6a970; }
.red { background: #fa5c5c; }
.green { background: #79b52e; }
.v { border: 1px solid #3a3a3a; font-size: 8.800px; color: #333; }

.cD { grid-column: D; }
.cE { grid-column: E; }
.cF { grid-column: F; }
.cG { grid-column: G; }
.cI { grid-column: I; }
.cJ { grid-column: J; }
.r46 { grid-row: 6; }
.r47 { grid-row: 7; }
.r48 { grid-row: 8; }
.r49 { grid-row: 9; }
.r50 { grid-row: 10; }
.r51 { grid-row: 11; }
.r52 { grid-row: 12; }
.r53 { grid-row: 13; }
.r54 { grid-row: 14; }
.r55 { grid-row: 15; }
.r56 { grid-row: 16; }

.nee { grid-column: F / H; grid-row: 4; background: #fbcaa3; font-weight: 700; font-size: 9px; }
.ret-title { grid-column: I / K; grid-row: 4; background: #df630d; color: #fff; font-weight: 700; line-height: 12px; font-size: 8.800px; overflow: hidden; align-items: flex-start; padding-top: 1px; white-space: nowrap; }
.h1a { grid-column: D / F; grid-row: 5; }
.h1b { grid-column: F / H; grid-row: 5; border-right: 0; }
.h1c { grid-column: I / K; grid-row: 5; border-right: 0; }
.r46.navy { border: 0; }
.nm { grid-row: 7 / 9; }
.ret-h1 { grid-column: I; grid-row: 6; line-height: 12px; font-size: 8.800px; padding: 0 10px; }
.ret-h2 { grid-column: J; grid-row: 6; }
.tot { grid-row: 5; background: #fff; border-top: 1px solid #333; border-bottom: 1px solid #333; justify-content: flex-start; padding-left: 1px; font-size: 8px; }
.tot-a { grid-column: L; border-left: 1px solid #333; font-size: 9.500px; }
.tot-b { grid-column: M; border-right: 2px solid #333; }
.tf-a { grid-column: N; grid-row: 5; background: #d6e0ee; }
.tot-c { grid-column: O; background: #d6e0ee; padding-left: 0; white-space: nowrap; }
.tot-d { grid-column: P; border-right: 2px solid #333; }
.tf-b { grid-column: Q; grid-row: 5; background: #d6e0ee; }
.sintese { grid-column: L / O; grid-row: 6; font-size: 14px; font-weight: 700; color: #1a1a1a; }
.year { grid-column: O / Q; grid-row: 7; font-size: 9.500px; line-height: 11px; color: #444; padding-left: 2px; white-space: nowrap; }
.year span { background: #d6e0ee; margin-left: -1px; padding-left: 1px; }

.alunos { grid-column: B / D; grid-row: 8; align-self: end; font-weight: 700; padding-left: 2px; line-height: 11px; font-size: 9px; margin-top: -2px; white-space: nowrap; }
.marker { grid-column: C; grid-row: 7 / 9; justify-self: end; align-self: center; width: 0; height: 0; border-left: 4px solid transparent; border-top: 4px solid #c0282a; }
.lab { grid-column: B / D; border: 1px solid #111; padding-left: 2px; line-height: 13px; font-size: 8.800px; display: flex; align-items: center; white-space: nowrap; }
.just { display: block; white-space: normal; text-align: justify; padding: 0 0 0 2px; }
.ctl, .ctl-l { font-size: 7px; color: #444; line-height: 10px; text-align: center; }
.ctl-l { grid-column: B; text-align: left; padding-left: 1px; }
.sec-mark { grid-column: A; grid-row: 18; background: #17375e; }
.sec { grid-column: B / END; grid-row: 18; background: #fbc9a2; font-weight: 900; font-size: 8.500px; padding-left: 1px; line-height: 13px; }

.vscroll { width: 15px; background: #d0d0d0; display: flex; flex-direction: column; align-items: stretch; padding-top: 2px; margin-right: 1px; }
.sb-btn { display: flex; align-items: center; justify-content: center; height: 10px; background: #f0f0f0; }
.sb-thumb { height: 14px; margin: 1px 1px 0; background: #fff; }
.sb-down { margin-top: auto; margin-bottom: 1px; }

/* sheet tabs */
.sheettabs { position: relative; display: flex; align-items: stretch; height: 19px; flex: none; background: #e1e1e1; border-top: 1px solid #cfcfcf; font-size: 10.900px; color: #666; white-space: nowrap; }
.nav { width: 64px; display: flex; align-items: center; gap: 13px; padding-left: 15px; border-right: 1px solid #bbb; height: 14px; margin-top: 2px; }
.st { display: flex; align-items: center; justify-content: center; height: 17px; }
.st-first { width: 105px; border-right: 1px solid #bbb; }
.st-intro { width: 69px; }
.st-col { margin-right: 2px; }
.s5a { width: 30px; background: #ffff00; color: #666; }
.s5b { width: 28px; margin-right: 3px; background: #00a650; color: #2e5a3a; }
.s6a { width: 28px; margin-right: 3px; background: #df6410; color: #f5c9a2; }
.s6b { width: 29px; background: #fb0006; color: #f5b4b6; }
.stot { width: 117px; background: #b50006; color: #f2c7c9; font-size: 10.200px; }
.st-on { width: 110px; height: 18px; margin-right: 2px; background: linear-gradient(#ffffe0, #fff); border-bottom: 1px solid #217346; color: #1a6b3e; font-weight: 700; font-size: 10.600px; }
.scon { width: 114px; background: #0aa0ef; color: #12417e; font-size: 9.900px; }
.add { width: 13px; height: 13px; margin: 2px 0 0 21px; border: 1px solid #b8b8b8; border-radius: 50%; font-size: 11px; line-height: 10px; text-align: center; color: #b0b0b0; }
.dots { position: absolute; left: 890px; top: 2px; font-size: 10px; line-height: 14px; color: #999; }
.hscroll { position: absolute; left: 904px; top: 1px; width: 105px; height: 14px; display: flex; }
.hs-btn { width: 13px; display: flex; align-items: center; justify-content: center; background: #f0f0f0; }
.hs-thumb { width: 23px; background: #fff; }
.hs-track { flex: 1; background: #d0d0d0; }

/* status */
.status { position: relative; display: flex; align-items: center; height: 17px; flex: none; background: #f0f0f0; border-top: 1px solid #dcdcdc; font-size: 8.500px; color: #555; }
.st-edit { margin-left: 4px; width: 47px; }
.vw-a { position: absolute; left: 826px; top: 3px; }
.vw-b { position: absolute; left: 850px; top: 3px; }
.vw-c { position: absolute; left: 874px; top: 3px; }
.zm-minus { position: absolute; left: 894px; top: 8px; width: 6px; height: 1px; background: #555; }
.zm-track { position: absolute; left: 904px; top: 8px; width: 79px; height: 1px; background: #c0c0c0; }
.zm-track i { position: absolute; left: 39px; top: -2px; width: 1px; height: 5px; background: #aaa; }
.zm-plus { position: absolute; left: 985px; top: 1px; font-size: 11px; font-weight: 700; line-height: 14px; }
.zm-val { position: absolute; left: 998px; color: #bbb; }

/* taskbar */
.taskbar { position: relative; height: 32px; flex: none; background: #080808; color: #ddd; }
.taskbar svg { position: absolute; }
.tb-letter { font-family: "Liberation Sans", sans-serif; font-size: 8px; font-weight: 700; fill: #fff; }
.tb-win { left: 13px; top: 10px; }
.tb-search { left: 51px; top: 9px; }
.tb-view { left: 88px; top: 10px; }
.tb-edge { left: 129px; top: 8px; }
.tb-folder { left: 168px; top: 9px; }
.tb-store { left: 207px; top: 6px; }
.tb-mc { left: 248px; top: 7px; }
.tb-word { left: 289px; top: 8px; }
.tb-active { position: absolute; left: 318px; top: 0; width: 39px; height: 32px; background: #2d2d2d; border-bottom: 2px solid #7db6e4; }
.tb-xl { left: 330px; top: 8px; }
.tb-line { position: absolute; top: 30px; height: 2px; background: #7db6e4; }
.l1 { left: 161px; width: 32px; }
.l2 { left: 281px; width: 32px; }
.tr-people { left: 819px; top: 10px; }
.tr-up { left: 848px; top: 13px; }
.tr-bat { left: 866px; top: 12px; }
.tr-wifi { left: 887px; top: 11px; }
.tr-vol { left: 905px; top: 10px; }
.clock { position: absolute; left: 920px; top: 2px; width: 60px; display: flex; flex-direction: column; align-items: center; font-size: 9.300px; line-height: 15px; }
.tr-msg { left: 990px; top: 10px; }
```
